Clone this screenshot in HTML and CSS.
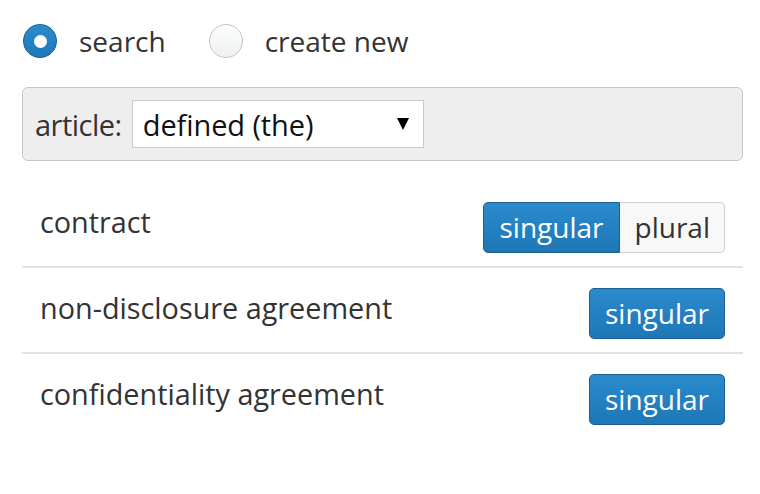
FILE: index.html
```html
<!DOCTYPE html>
<html>
<head>
<meta charset="utf-8">
<link rel="stylesheet" href="styles.css">
</head>
<body>
<div class="wrap">
  <div class="radios">
    <label class="radio-opt">
      <span class="radio-circle checked"></span>
      <span class="radio-text">search</span>
    </label>
    <label class="radio-opt">
      <span class="radio-circle"></span>
      <span class="radio-text">create new</span>
    </label>
  </div>

  <div class="panel">
    <span class="panel-label">article:</span>
    <div class="select">
      <span class="select-text">defined (the)</span>
      <span class="select-arrow"></span>
    </div>
  </div>

  <div class="list">
    <div class="row">
      <span class="row-label">contract</span>
      <div class="btn-group">
        <span class="btn btn-primary btn-first">singular</span>
        <span class="btn btn-default btn-last">plural</span>
      </div>
    </div>
    <div class="row">
      <span class="row-label">non-disclosure agreement</span>
      <div class="btn-group">
        <span class="btn btn-primary">singular</span>
      </div>
    </div>
    <div class="row">
      <span class="row-label">confidentiality agreement</span>
      <div class="btn-group">
        <span class="btn btn-primary">singular</span>
      </div>
    </div>
  </div>
</div>
</body>
</html>
```

FILE: styles.css
```css
html, body {
  margin: 0;
  padding: 0;
  background: #ffffff;
}

body {
  font-family: "Open Sans", "Noto Sans", sans-serif;
  color: #333333;
}

.wrap {
  padding: 24px 17px 0 22px;
}

.radios {
  display: flex;
  align-items: center;
  height: 34px;
}

.radio-opt {
  display: flex;
  align-items: center;
  gap: 22px;
  margin-left: 1px;
  margin-right: 42px;
}

.radio-circle {
  display: block;
  width: 34px;
  height: 34px;
  box-sizing: border-box;
  border-radius: 50%;
  border: 1px solid #c4c4c4;
  background: linear-gradient(#fdfdfd, #eef0f2);
  position: relative;
}

.radio-circle.checked {
  border: 1px solid #1d5d8c;
  background: linear-gradient(#2b8ccd, #1f78b9);
}

.radio-circle.checked::after {
  content: "";
  position: absolute;
  left: 9.5px;
  top: 9.5px;
  width: 13px;
  height: 13px;
  border-radius: 50%;
  background: #ffffff;
}

.radio-text {
  font-size: 28px;
  line-height: 34px;
  color: #333333;
}

.panel {
  margin-top: 29px;
  height: 74px;
  box-sizing: border-box;
  border: 1px solid #c6c6c6;
  border-radius: 6px;
  background: #eeeeee;
  display: flex;
  align-items: center;
  padding: 0 12px;
  gap: 10px;
}

.panel-label {
  font-size: 29px;
  letter-spacing: -0.5px;
  color: #333333;
}

.select {
  width: 292px;
  height: 48px;
  box-sizing: border-box;
  border: 1px solid #c9c9c9;
  background: #ffffff;
  display: flex;
  align-items: center;
  justify-content: space-between;
  padding: 0 14px 0 10px;
}

.select-text {
  font-size: 29px;
  letter-spacing: -0.1px;
  color: #111111;
}

.select-arrow {
  width: 0;
  height: 0;
  border-left: 6px solid transparent;
  border-right: 6px solid transparent;
  border-top: 12px solid #000000;
}

.list {
  margin-top: 21px;
}

.row {
  display: flex;
  justify-content: space-between;
  align-items: flex-start;
  padding: 0 18px;
  height: 84px;
}

.row + .row {
  border-top: 2px solid #e2e2e2;
}

.row-label {
  font-size: 28.8px;
  line-height: 38px;
  margin-top: 21px;
  color: #333333;
}

.btn-group {
  display: flex;
  margin-top: 20px;
}

.btn {
  display: block;
  height: 51px;
  box-sizing: border-box;
  font-size: 28px;
  line-height: 49px;
  padding: 0 15px;
  border-radius: 5px;
}

.btn-primary {
  color: #ffffff;
  background: linear-gradient(#2a8bcc, #1e77b7);
  border: 1px solid #1b5f90;
}

.btn-default {
  color: #333333;
  background: #f8f8f8;
  border: 1px solid #cfcfcf;
}

.btn-first {
  border-top-right-radius: 0;
  border-bottom-right-radius: 0;
  padding: 0 15px 0 16px;
}

.btn-last {
  border-top-left-radius: 0;
  border-bottom-left-radius: 0;
  border-left: none;
  padding: 0 14px 0 15px;
}
```
